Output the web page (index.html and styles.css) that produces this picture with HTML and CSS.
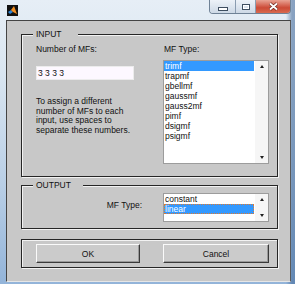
FILE: index.html
```html
<!DOCTYPE html>
<html lang="en">
<head>
  <meta charset="UTF-8" />
  <title>Membership Functions</title>
  <link rel="stylesheet" href="styles.css">
</head>
<body>

  <div class="window">
    <div class="titlebar">
      <svg class="app-icon" width="11" height="11" viewBox="0 0 11 11">
        <rect width="11" height="11" fill="#111" />
        <path d="M1 7 L4 5 L6 7 L3 9 Z" fill="#2f86d8" />
        <path d="M4 5 L7 1 L10 9 L8 8 L6 7 Z" fill="#f29024" />
        <path d="M7 1 L8.5 5 L10 9 Z" fill="#c8401e" />
      </svg>
      <div class="caption-buttons">
        <span class="cap cap-min"><span class="glyph-min"></span></span>
        <span class="cap cap-max"><span class="glyph-max"></span></span>
        <span class="cap cap-close">
          <svg width="11" height="9" viewBox="0 0 11 9">
            <path d="M2 1.5 L9 7.5 M9 1.5 L2 7.5" stroke="#6b2a20" stroke-width="3.2" />
            <path d="M2 1.5 L9 7.5 M9 1.5 L2 7.5" stroke="#fff" stroke-width="1.8" />
          </svg>
        </span>
      </div>
    </div>

    <div class="client">

      <div class="frame frame-input">
        <span class="frame-title">INPUT</span>
        <div class="col">
          <div class="label">Number of MFs:</div>
          <div class="edit">3 3 3 3</div>
          <p class="hint">To assign a different<br>number of MFs to each<br>input, use spaces to<br>separate these numbers.</p>
        </div>
        <div class="col">
          <div class="label label-list">MF Type:</div>
          <div class="listbox listbox-tall">
            <ul class="items">
              <li class="selected">trimf</li>
              <li>trapmf</li>
              <li>gbellmf</li>
              <li>gaussmf</li>
              <li>gauss2mf</li>
              <li>pimf</li>
              <li>dsigmf</li>
              <li>psigmf</li>
            </ul>
            <div class="scroll">
              <span class="arrow-up"></span>
              <span class="arrow-down"></span>
            </div>
          </div>
        </div>
      </div>

      <div class="frame frame-output">
        <span class="frame-title title-output">OUTPUT</span>
        <div class="label label-right">MF Type:</div>
        <div class="listbox listbox-short">
          <ul class="items">
            <li>constant</li>
            <li class="selected focused">linear</li>
          </ul>
          <div class="scroll">
            <span class="arrow-up"></span>
            <span class="arrow-down"></span>
          </div>
        </div>
      </div>

      <div class="frame frame-buttons">
        <button class="btn btn-ok">OK</button>
        <button class="btn btn-cancel">Cancel</button>
      </div>

    </div>
  </div>

</body>
</html>
```

FILE: styles.css
```css
html, body {
  margin: 0;
  padding: 0;
}

body {
  width: 295px;
  height: 284px;
  overflow: hidden;
  font-family: "Liberation Sans", Arial, sans-serif;
  font-size: 8.5px;
  color: #111;
}

.window {
  width: 295px;
  height: 284px;
  box-sizing: border-box;
  background:
    linear-gradient(to right, rgba(255, 255, 255, 0) 286px, rgba(60, 100, 150, 0.55) 292px),
    linear-gradient(to bottom, #e6eef6 0, #dae6f1 25%, #b9cfe6 65%, #93b4d9 100%);
}

/* title bar */
.titlebar {
  height: 20px;
  display: flex;
  justify-content: space-between;
  align-items: flex-start;
}

.app-icon {
  display: block;
  margin: 5px 0 0 7px;
}

.caption-buttons {
  display: flex;
  margin-right: 4px;
  height: 13px;
  border: 1px solid #6f8296;
  border-top: none;
  border-radius: 0 0 4px 4px;
  overflow: hidden;
}

.cap {
  display: flex;
  align-items: center;
  justify-content: center;
  height: 13px;
}

.cap-min {
  width: 25px;
  background: linear-gradient(to bottom, #edf2f8, #cdd9e6);
  border-right: 1px solid #8a9cb0;
}

.cap-max {
  width: 19px;
  background: linear-gradient(to bottom, #edf2f8, #cdd9e6);
  border-right: 1px solid #8a9cb0;
}

.cap-close {
  width: 34px;
  background: linear-gradient(to bottom, #e9a394, #cc4a36 60%, #d96a4f);
}

.glyph-min {
  width: 8px;
  height: 2px;
  margin-top: 4px;
  background: #fff;
  border: 1px solid #3e4e60;
}

.glyph-max {
  width: 6px;
  height: 4px;
  border: 1px solid #3e4e60;
  box-shadow: inset 0 0 0 1px #fff;
}

/* dialog body */
.client {
  margin-left: 6px;
  width: 285px;
  height: 262px;
  box-sizing: border-box;
  padding: 13px 0 0 14px;
  background: #c8c8c8;
  border-top: 1px solid #444;
  border-left: 1px solid #444;
  border-right: 1px solid #5a5a5a;
  border-bottom: 1px solid #e6e6e6;
}

.frame {
  position: relative;
  width: 257px;
  box-sizing: border-box;
  border: 1px solid #262626;
  box-shadow: inset 1px 1px 0 #f2f2f2, 1px 1px 0 #f2f2f2;
  display: grid;
  grid-template-columns: 127px 106px;
  padding-left: 14px;
}

.frame-title {
  position: absolute;
  top: -6px;
  left: 11px;
  line-height: 10px;
  padding: 0 16px 0 3px;
  background: #c8c8c8;
}

.title-output {
  padding-right: 12px;
}

.label {
  line-height: 10px;
}

.label-list {
  padding-left: 1px;
}

/* input frame */
.frame-input {
  padding-top: 9px;
  padding-bottom: 12px;
}

.edit {
  margin-top: 12px;
  width: 98px;
  height: 14px;
  box-sizing: border-box;
  background: #fdf8ff;
  border: 1px solid #ececec;
  line-height: 12px;
  padding-left: 1px;
}

.hint {
  margin: 17px 0 0;
  line-height: 9.7px;
}

/* list boxes */
.listbox {
  display: flex;
  width: 106px;
  box-sizing: border-box;
  background: #fff;
  border: 1px solid #9c9c9c;
}

.listbox-tall {
  margin-top: 6px;
  height: 104px;
}

.listbox-short {
  height: 29px;
}

.items {
  flex: 1;
  list-style: none;
  margin: 0;
  padding: 0;
}

.items li {
  height: 10px;
  line-height: 10px;
  padding-left: 1px;
  margin-right: 1px;
}

.items li.selected {
  background: #3399ff;
  color: #fff;
}

.items li.focused {
  outline: 1px dotted #e07a30;
  outline-offset: -1px;
}

.scroll {
  width: 13px;
  background: #f6f6f6;
  display: flex;
  flex-direction: column;
  justify-content: space-between;
  align-items: center;
  padding: 4px 0;
}

.arrow-up {
  width: 0;
  height: 0;
  border-left: 2.5px solid transparent;
  border-right: 2.5px solid transparent;
  border-bottom: 3px solid #222;
}

.arrow-down {
  width: 0;
  height: 0;
  border-left: 2.5px solid transparent;
  border-right: 2.5px solid transparent;
  border-top: 3px solid #222;
}

/* output frame */
.frame-output {
  margin-top: 8px;
  padding-top: 7px;
  padding-bottom: 6px;
}

.label-right {
  margin-top: 7px;
  text-align: right;
  padding-right: 21px;
}

/* buttons */
.frame-buttons {
  margin-top: 10px;
  padding-top: 4px;
  padding-bottom: 4px;
}

.btn {
  height: 19px;
  box-sizing: border-box;
  padding: 0;
  font-family: inherit;
  font-size: 8.5px;
  color: #111;
  background: #cbcbcb;
  border-top: 1px solid #fafafa;
  border-left: 1px solid #fafafa;
  border-right: 1px solid #3a3a3a;
  border-bottom: 1px solid #3a3a3a;
  box-shadow: inset -1px -1px 0 #9a9a9a;
  cursor: pointer;
}

.btn-ok {
  width: 104px;
}

.btn-cancel {
  width: 106px;
}
```
